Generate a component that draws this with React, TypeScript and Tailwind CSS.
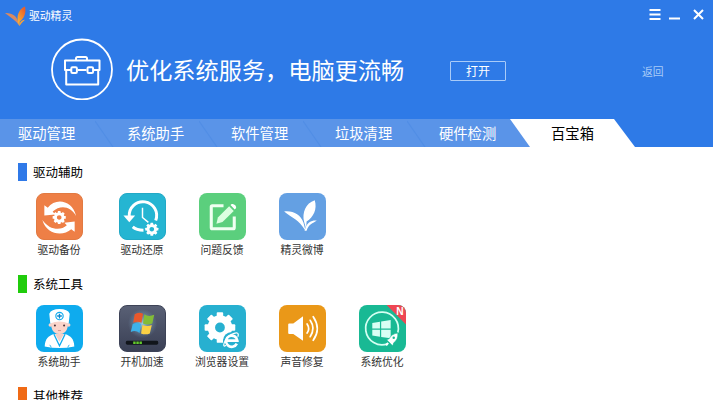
import type { ReactNode } from "react";

const tabs = ["系统助手", "软件管理", "垃圾清理", "硬件检测"];

// toothed wheel, the centre stays open
function Gear({ cx, cy, r, hole = 0.35 }: { cx: number; cy: number; r: number; hole?: number }) {
  const rim = 0.8;
  return (
    <g transform={`translate(${cx} ${cy})`}>
      {[0, 45, 90, 135, 180, 225, 270, 315].map((a) => (
        <rect key={a} x={-r * 0.21} y={-r} width={r * 0.42} height={r * 0.4} rx={r * 0.06} fill="#fff" transform={`rotate(${a})`} />
      ))}
      <circle r={(r * (rim + hole)) / 2} fill="none" stroke="#fff" strokeWidth={r * (rim - hole)} />
    </g>
  );
}

function Leaf() {
  return (
    <svg viewBox="0 0 22 22" className="h-[22px] w-[22px]">
      <defs>
        <linearGradient id="leaf" x1="0" y1="1" x2="0.6" y2="0">
          <stop offset="0" stopColor="#ffc233" />
          <stop offset="1" stopColor="#e8602c" />
        </linearGradient>
      </defs>
      <path d="M0 7C7 6.500 12 10 13.500 16.500L14.500 20C11 14.500 6 11.500 0 7Z" fill="#d98a62" />
      <path d="M13 16.500C11.500 9 14 3 20 0.500C21.500 7 19 12.500 14.800 15.500L14.500 20Z" fill="url(#leaf)" />
      <path d="M14.500 18C15.500 15 17.500 14 20 13.800C18.500 15.500 16.500 17 14.500 20Z" fill="#f2a13c" />
    </svg>
  );
}

function Toolbox() {
  return (
    <svg viewBox="0 0 62 62" className="h-[62px] w-[62px]" fill="none" stroke="#fff">
      <circle cx="31" cy="31.500" r="30" strokeWidth="1.800" />
      <g strokeWidth="2" strokeLinejoin="round">
        <path d="M25 22V20.500Q25 19 26.500 19H34.500Q36 19 36 20.500V22" />
        <path d="M20 32H14V22.500H48.500V32H43M27 32H35.500" />
        <path d="M15.200 32V46.500H47.200V32" />
        <rect x="20.300" y="29.300" width="5.600" height="5.600" rx="1.200" />
        <rect x="36.500" y="29.300" width="5.600" height="5.600" rx="1.200" />
      </g>
    </svg>
  );
}

function Tile({ className, children }: { className: string; children: ReactNode }) {
  return (
    <svg viewBox="0 0 46 46" className={`h-[47px] w-[47px] rounded-[8px] ${className}`}>
      {children}
    </svg>
  );
}

function BackupIcon() {
  return (
    <Tile className="border border-[#e27a42] bg-[#ee7f46]">
      <path d="M7.500 22V11.500L11 14C19 3.500 36 6 40 22.500C34.500 12.500 24 10.500 16 18L18.500 21Z" fill="#fff" />
      <path d="M38.500 28V38.500L35 36C26 44 9.500 41 5.500 26.500C12 36 23.500 38.500 30.500 32L28 29.500Z" fill="#fff" />
      <Gear cx={22.700} cy={24} r={6.700} />
    </Tile>
  );
}

function RestoreIcon() {
  return (
    <Tile className="border border-[#22a9c6] bg-[#25b5d2]">
      <path d="M9.500 23A14 14 0 1 1 36.500 27" fill="none" stroke="#fff" strokeWidth="3" />
      <path d="M3.500 22H15.500L9.500 29Z" fill="#fff" />
      <path d="M13 33.500Q17 37 24 37" fill="none" stroke="#fff" strokeWidth="3" />
      <path d="M23 14V24L29 29" fill="none" stroke="#fff" strokeWidth="1.500" />
      <Gear cx={32.500} cy={36} r={6.700} />
    </Tile>
  );
}

function FeedbackIcon() {
  return (
    <Tile className="bg-[#5bcf7d]">
      <path d="M24 12.500H13Q12 12.500 12 13.500V34Q12 35 13 35H33.500Q34.500 35 34.500 34V23" fill="none" stroke="#effff1" strokeWidth="3" />
      <path d="M17 30L18.500 24L29.500 13L34 17.500L23 28.500Z" fill="#dcffe1" />
      <path d="M30.800 11.800L32 10.800Q34 10.300 35.700 12.200Q37 14 36 15.200L35 16.200Z" fill="#fff" />
    </Tile>
  );
}

function WeiboIcon() {
  return (
    <Tile className="bg-[#64a0e3]">
      <path d="M5 18C14 17 21 21 24 29L26 37C19 25.500 13 24.500 5 18Z" fill="#fff" />
      <path d="M24.500 28C22.500 19 26 10 35 7C37.500 16 34 23 27 28L26.500 35Z" fill="#fff" />
      <path d="M26 34C28 28.500 32 26.500 37 27C33 30 29 30.500 27 37H25Z" fill="#fff" />
    </Tile>
  );
}

function DoctorIcon() {
  return (
    <Tile className="bg-[#0eabee]">
      <path d="M8.500 40.500C9 33 12 30.500 17.500 28.500H28.500C34 30.500 37 33 37.500 40.500Q23 43.500 8.500 40.500Z" fill="#fff" />
      <path d="M18.500 28.500L23 36L27.500 28.500Z" fill="#f4cfc6" />
      <path d="M17.500 28.500L23 40L28.500 28.500" fill="none" stroke="#0eabee" strokeWidth="1.200" />
      <path d="M13.500 39L15 41.500M32.500 39L31 41.500" stroke="#0eabee" strokeWidth="0.800" />
      <path d="M14.500 15H31.500L31 21.500Q29.500 28.500 23 28.500Q16.500 28.500 15 21.500Z" fill="#fad4ca" />
      <circle cx="14" cy="19.500" r="1.700" fill="#fad4ca" />
      <circle cx="32" cy="19.500" r="1.700" fill="#fad4ca" />
      <path d="M14 18L13 8.500Q15 4 23 4Q31 4 33 8.500L32 18Q23 14.500 14 18Z" fill="#fff" />
      <circle cx="23" cy="10.800" r="3.600" fill="none" stroke="#0eabee" strokeWidth="1.100" />
      <path d="M23 8.500V13.100M20.700 10.800H25.300" stroke="#0e88ce" strokeWidth="1.300" />
      <circle cx="18.500" cy="20" r="1" fill="#4b3339" />
      <circle cx="27.500" cy="20" r="1" fill="#4b3339" />
      <path d="M21.500 25H24.500" stroke="#c98b82" strokeWidth="0.800" />
    </Tile>
  );
}

function BootIcon() {
  return (
    <Tile className="border border-[#3d4357] bg-linear-to-b from-[#596075] to-[#3a4055]">
      <defs>
        <radialGradient id="glow">
          <stop offset="0" stopColor="#a6e5fa" stopOpacity="0.800" />
          <stop offset="1" stopColor="#79a5c5" stopOpacity="0" />
        </radialGradient>
      </defs>
      <circle cx="23" cy="18" r="15" fill="url(#glow)" />
      <path d="M15 8.500Q19 5.500 23.500 8L22 17Q18 15 13.500 17Z" fill="#e9582b" />
      <path d="M25 8.500Q29 11.500 35 9L33 18Q28 20 23.500 18Z" fill="#83bc37" />
      <path d="M13 18.500Q17 16.500 21.500 18.500L20 27.500Q16 24 11 26.500Z" fill="#3cb2ea" />
      <path d="M23 19.500Q28 21.500 32.500 19.500L30.500 28Q26 30 21.500 28Z" fill="#fbd044" />
      <rect x="6" y="35.500" width="33" height="4" rx="1.500" fill="#11151b" />
      <path d="M13.500 37.500H22.500" stroke="#64cb2c" strokeWidth="2.500" strokeDasharray="2.500 0.700" />
    </Tile>
  );
}

function BrowserIcon() {
  return (
    <Tile className="bg-[#27b0d0]">
      <Gear cx={20.500} cy={22} r={15} hole={0.320} />
      <circle cx="32" cy="35" r="8.500" fill="#27b0d0" />
      <path d="M37 37.800A5.500 5.500 0 1 1 37.500 34.800H27" fill="none" stroke="#fff" strokeWidth="2.600" />
      <path d="M26.500 39.500C22 43 24.500 33 31.500 29C37 26 39.500 27 38 31" fill="none" stroke="#fff" strokeWidth="1.200" />
    </Tile>
  );
}

function SoundIcon() {
  return (
    <Tile className="bg-[#ea9818]">
      <path d="M9 19Q9 18 10 18H14L23.500 11V35L14 28.500H10Q9 28.500 9 27.500Z" fill="#fff" />
      <g fill="none" stroke="#fff" strokeWidth="1.700" strokeLinecap="round">
        <path d="M27.500 18.500Q30.500 23 27.500 27.500" />
        <path d="M30.500 15Q36 23 30.500 31" />
        <path d="M33.500 11.500Q41.500 23 33.500 34.500" />
      </g>
    </Tile>
  );
}

function OptimizeIcon() {
  return (
    <Tile className="bg-[#19b994]">
      <path d="M28 38A16 16 0 1 1 38 27" fill="none" stroke="#d4fff2" strokeWidth="1.700" />
      <path d="M13 17.500L20.500 16.300V23H13ZM21.700 16.100L31 14.700V23H21.700ZM13 24.200H20.500V31L13 29.800ZM21.700 24.200H31V32.500L21.700 31.200Z" fill="#d9fff4" />
      <path d="M38 27.500Q32 28 29.500 33L27 34L28.500 35.500L31.500 38.500L33 40L34 37Q38.500 34 38 27.500Z" fill="#fff" stroke="#19b994" strokeWidth="0.600" />
      <circle cx="34" cy="32" r="1.200" fill="#19b994" />
      <path d="M28.500 37L26.500 39.500" stroke="#fff" strokeWidth="2" />
      <path d="M27 0H46V19Z" fill="#ee4753" />
      <text x="36.500" y="10" fontSize="10" fontWeight="700" fill="#fff" fontFamily="Liberation Sans, sans-serif">N</text>
    </Tile>
  );
}

const sections = [
  {
    title: "驱动辅助",
    bar: "bg-[#2f79e8]",
    items: [
      { name: "驱动备份", icon: <BackupIcon /> },
      { name: "驱动还原", icon: <RestoreIcon /> },
      { name: "问题反馈", icon: <FeedbackIcon /> },
      { name: "精灵微博", icon: <WeiboIcon /> },
    ],
  },
  {
    title: "系统工具",
    bar: "bg-[#20cc0c]",
    items: [
      { name: "系统助手", icon: <DoctorIcon /> },
      { name: "开机加速", icon: <BootIcon /> },
      { name: "浏览器设置", icon: <BrowserIcon /> },
      { name: "声音修复", icon: <SoundIcon /> },
      { name: "系统优化", icon: <OptimizeIcon /> },
    ],
  },
  { title: "其他推荐", bar: "bg-[#f06a15]", items: [] },
];

export default function App() {
  return (
    <div className="h-[400px] w-[713px] overflow-hidden bg-white font-['Noto_Sans_CJK_SC',sans-serif]">
      <header className="flex h-[147px] flex-col bg-[#2e7ae7] text-white">
        {/* Title bar */}
        <div className="flex h-8 items-start justify-between pl-[5px] pr-[9px]">
          <div className="flex items-start gap-[2px] pt-[6px]">
            <Leaf />
            <span className="text-[10.800px] leading-[18px]">驱动精灵</span>
          </div>
          <svg viewBox="0 0 56 12" className="mt-[9px] h-3 w-14" fill="none" stroke="#fff" strokeWidth="1.900">
            <path d="M1.500 1H12.500M1.500 5.500H12.500M1.500 10H12.500" />
            <path d="M21 9.500H32" strokeWidth="2" />
            <path d="M46 1L55 10M55 1L46 10" strokeWidth="2" />
          </svg>
        </div>

        {/* Banner */}
        <div className="flex h-[87px] items-start pl-[51px] pt-[6px]">
          <Toolbox />
          <h1 className="ml-[13px] w-[324px] whitespace-nowrap text-[23.200px] leading-[62px]">优化系统服务，电脑更流畅</h1>
          <button className="mt-[23px] h-5 w-[56px] rounded-[1px] border border-[#a9cbf8] text-[12px] leading-[18px]">打开</button>
          <span className="ml-[136px] mt-[23px] text-[10.800px] leading-[20px] text-[#a9cbf7]">返回</span>
        </div>

        {/* Tabs */}
        <nav className="flex h-7 text-[14.300px] leading-7">
          <div className="flex w-[530px] shrink-0 bg-[#5a94e8]">
            <div className="w-[95px] pl-[18px]">驱动管理</div>
            {tabs.map((tab) => (
              <div key={tab} className="relative w-[104px] pl-[32px]">
                <svg viewBox="0 0 20 28" className="absolute left-0 top-0 h-7 w-5">
                  <path d="M0 2L18 28" stroke="#518ee5" strokeWidth="1.200" />
                </svg>
                {tab}
              </div>
            ))}
          </div>
          <div className="-ml-[20px] w-[125px] bg-white text-center text-black [clip-path:polygon(0_0,104px_0,100%_100%,20px_100%)]">
            百宝箱
          </div>
        </nav>
      </header>

      {/* Tool groups */}
      <main className="pl-[18px] pt-[16px]">
        {sections.map((section) => (
          <section key={section.title} className="h-28">
            <div className="flex h-[18px] items-center gap-[6px]">
              <span className={`h-[18px] w-[9px] ${section.bar}`} />
              <h2 className="text-[12.500px] leading-[18px] text-black">{section.title}</h2>
            </div>
            <div className="mt-[12px] flex pl-px">
              {section.items.map((item) => (
                <div key={item.name} className="flex w-20 flex-col items-center first:mr-[3px]">
                  {item.icon}
                  <span className="text-[10.800px] leading-[19px] text-[#333]">{item.name}</span>
                </div>
              ))}
            </div>
          </section>
        ))}
      </main>
    </div>
  );
}
